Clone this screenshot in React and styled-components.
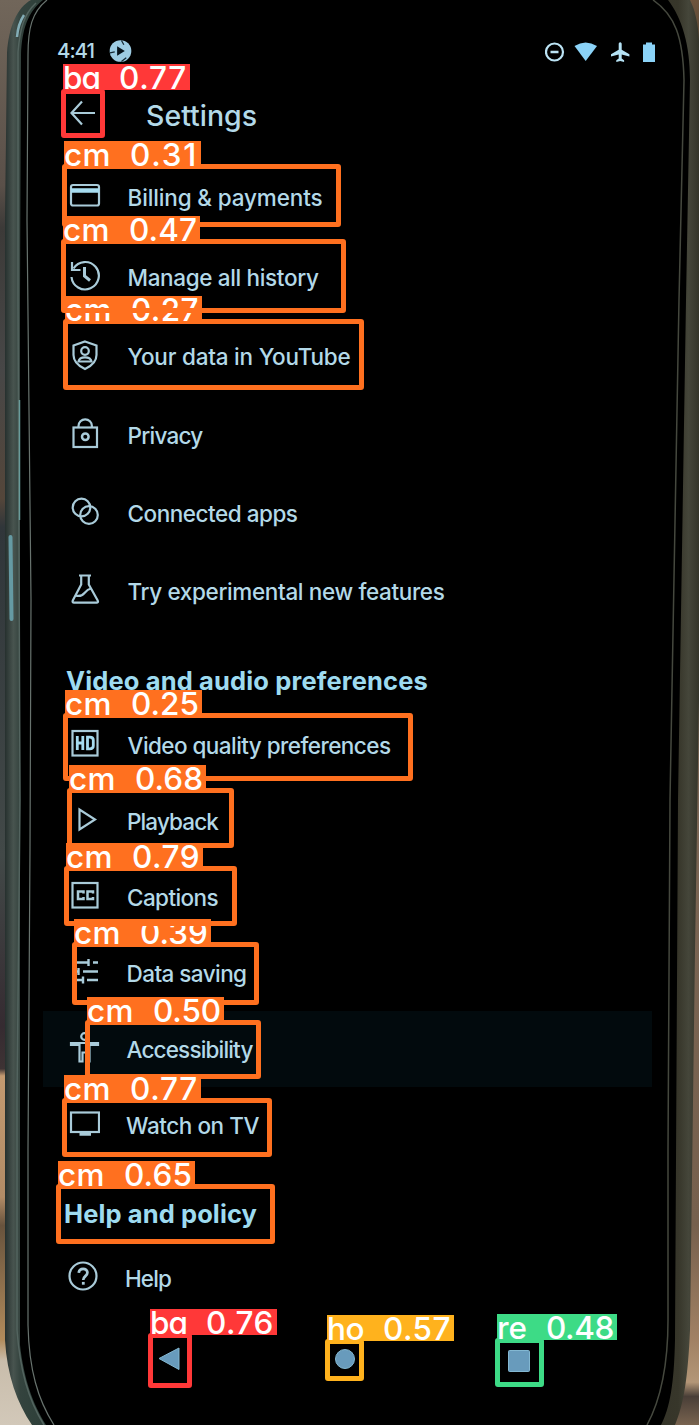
import React, { useLayoutEffect, useRef } from "react";
import styled, { createGlobalStyle } from "styled-components";

const GlobalStyle = createGlobalStyle`
  * { box-sizing: border-box; }
  body {
    margin: 0;
    background: #000;
    font-family: Inter, "Open Sans", "Liberation Sans", sans-serif;
  }
`;

const Stage = styled.main`
  position: relative;
  width: 699px;
  height: 1425px;
  overflow: hidden;
  background: #000;
`;

const Backdrop = styled.svg`
  position: absolute;
  inset: 0;
  display: block;
`;

const Screen = styled.div`
  position: relative;
  display: flex;
  flex-direction: column;
  height: 100%;
  padding: 26px 47px 0 43px;
  color: #b3d9e8;
`;

const StatusBar = styled.header`
  display: flex;
  align-items: center;
  flex: none;
  height: 50px;
  padding: 0 0 0 14px;
`;

const StatusIcons = styled.div`
  display: flex;
  align-items: center;
  margin-left: auto;
  padding: 2px 0 0;
  margin-right: -5px;
`;

const AppBar = styled.div`
  display: flex;
  align-items: center;
  flex: none;
  height: 78px;
  margin-bottom: 3px;
  padding: 2px 0 0 26px;
`;

const IconSlot = styled.span`
  display: flex;
  flex: none;
  width: ${(p) => p.$w}px;
  margin-bottom: ${(p) => p.$lift ?? 4}px;
`;

const Row = styled.div`
  display: flex;
  align-items: center;
  flex: none;
  height: ${(p) => p.$height}px;
  padding-left: ${(p) => p.$pad}px;
  background: ${(p) => (p.$active ? "#020a0d" : "transparent")};
`;

const SectionTitle = styled.h2`
  display: flex;
  align-items: center;
  flex: none;
  height: 77px;
  margin: 0;
  padding: 26px 0 0 ${(p) => p.$pad}px;
  color: #9edbf0;
`;

const NavBar = styled.nav`
  display: flex;
  align-items: center;
  flex: none;
  height: 86px;
  padding-left: 115px;
`;

const NavItem = styled.span`
  display: flex;
  width: ${(p) => p.$w}px;
  padding-top: ${(p) => p.$drop ?? 0}px;
`;

const Text = styled.span`
  display: inline-block;
  white-space: nowrap;
  font-size: ${(p) => p.$size}px;
  font-weight: ${(p) => p.$weight};
  line-height: 1.2;
`;

const Box = styled.div`
  position: absolute;
  left: ${(p) => p.$x}px;
  top: ${(p) => p.$y}px;
  width: ${(p) => p.$w}px;
  height: ${(p) => p.$h}px;
  border: 5px solid ${(p) => p.$color};
  border-radius: 3px;
`;

const Tag = styled.div`
  position: absolute;
  left: ${(p) => p.$x}px;
  top: ${(p) => p.$y}px;
  width: ${(p) => p.$w}px;
  height: 26px;
  display: flex;
  align-items: center;
  gap: 19px;
  padding: 1px 0 0 0;
  background: ${(p) => p.$color};
  color: #fff;
`;

/* Sets a label on a fixed measure by adjusting its tracking. */
function Fit({ width, size = 22.5, weight = 500, children, ...rest }) {
  const ref = useRef(null);
  useLayoutEffect(() => {
    const el = ref.current;
    const fit = () => {
      el.style.letterSpacing = "0px";
      const natural = el.getBoundingClientRect().width;
      const step = (width - natural) / Math.max(1, children.length);
      el.style.letterSpacing = `${step}px`;
    };
    fit();
    document.fonts?.ready.then(fit);
  }, [width, children]);
  return (
    <Text ref={ref} $size={size} $weight={weight} {...rest}>
      {children}
    </Text>
  );
}

const TagText = styled(Fit)`
  line-height: 24px;
  font-feature-settings: "cv11" 1;
`;

const Glyph = ({ children, size = 32 }) => (
  <svg
    width={size}
    height={size}
    viewBox={`0 0 ${size} ${size}`}
    fill="none"
    stroke="#a9cbd9"
    strokeWidth="2.2"
  >
    {children}
  </svg>
);

const icons = {
  card: (
    <>
      <rect x="2" y="6" width="28" height="20.500" rx="2" />
      <path d="M2 11.500h28" strokeWidth="4.500" stroke="#a6dcf0" />
    </>
  ),
  history: (
    <>
      <path d="M4.500 9.500A13.700 13.700 0 1 1 2.500 18" />
      <path d="M3 3v8h8.500" />
      <path d="M15.500 8v9l5.500 4.500" strokeWidth="3" />
    </>
  ),
  shield: (
    <>
      <path d="M16 2.500l11.500 4v9.500c0 6.500-5 11-11.500 14-6.500-3-11.500-7.500-11.500-14V6.500z" />
      <circle cx="16" cy="12" r="3.800" />
      <path d="M9.500 22.500c.5-3 3-4.200 6.500-4.200s6 1.200 6.500 4.200z" />
    </>
  ),
  lock: (
    <>
      <rect x="4.500" y="10.500" width="23.500" height="19.500" />
      <path d="M9.500 10.500V9a6.700 6.700 0 0 1 13.400 0v1.500" />
      <circle cx="16.300" cy="19.800" r="3.300" strokeWidth="2.500" />
    </>
  ),
  rings: (
    <>
      <circle cx="12.500" cy="12.500" r="8.800" />
      <circle cx="20" cy="20" r="8.800" />
    </>
  ),
  flask: (
    <>
      <path d="M10 2.500h12M12.200 2.500v9L3.800 27.500c-.6 1.500 0 2.200 1.200 2.200h22.500c1.300 0 2-.7 1.200-2.200L19.800 11.500V2.500" />
      <path d="M6.500 22.500c4 1.200 6.500.5 9-2.500s3.500-4 6.500-4.500" />
    </>
  ),
  hd: (
    <>
      <rect x="3.500" y="4" width="25" height="24.500" />
      <path d="M8.300 9v14M13.800 9v14M8.300 16h5.500M18.500 10.200v11.600h2.300c2.400 0 3.500-1 3.500-3v-5.600c0-2-1.100-3-3.500-3z" strokeWidth="2.800" stroke="#a6dcf0" />
    </>
  ),
  play: <path d="M10.500 6.500v20L26 16.500z" />,
  cc: (
    <>
      <rect x="3.500" y="4" width="25" height="24.500" />
      <path d="M14.500 14.500v-2h-5.500v7.500h5.500v-2M24 14.500v-2h-5.500v7.500H24v-2" strokeWidth="2.500" />
    </>
  ),
  tune: (
    <path d="M4 7.500h15M19.500 4v7M24 7.500h5M4 16.500h6M9.500 13v7M14 16.500h15M4 25h9.500M14 21.500v7M18 25h11" strokeWidth="2.400" />
  ),
  person: (
    <>
      <circle cx="16.500" cy="5.500" r="3.300" />
      <path d="M3 12h27v2h-8.500v16.500h-3v-9h-4v9h-3V14H3z" />
    </>
  ),
  tv: (
    <>
      <rect x="3" y="5.500" width="28" height="19.500" />
      <path d="M11.500 27h11.500" strokeWidth="3.500" />
    </>
  ),
  help: (
    <>
      <circle cx="16" cy="16" r="13.500" />
      <path d="M11.800 12.900c.2-2.600 2-4.100 4.300-4.100s4.300 1.500 4.300 3.900c0 3.300-4.200 3.600-4.200 7.200" strokeWidth="2.700" />
      <path d="M14.900 23.300h2.800" strokeWidth="2.800" />
    </>
  ),
};

const mainRows = [
  ["card", "Billing & payments", 195, 80],
  ["history", "Manage all history", 191, 80],
  ["shield", "Your data in YouTube", 223, 79],
  ["lock", "Privacy", 75, 78],
  ["rings", "Connected apps", 170, 78],
  ["flask", "Try experimental new features", 317, 78],
];

const mediaRows = [
  ["hd", "Video quality preferences", 263, 26, 58.5],
  ["play", "Playback", 91, 26, 58],
  ["cc", "Captions", 91, 26, 58],
  ["tune", "Data saving", 120, 26, 57.5],
  ["person", "Accessibility", 126, 25, 58.5],
  ["tv", "Watch on TV", 133, 25, 58],
];

const ORANGE = "#ff701f";
const RED = "#ff3838";

/* Ordered from least to most confident, later ones lie on top. */
const detections = [
  { name: "cm", score: "0.25", color: ORANGE, tag: [65, 690, 137], box: [63, 713, 350, 68] },
  { name: "cm", score: "0.27", color: ORANGE, tag: [65, 296, 137], box: [63, 319, 301, 71] },
  { name: "cm", score: "0.31", color: ORANGE, tag: [64, 141, 137], box: [62, 164, 279, 63] },
  { name: "cm", score: "0.39", color: ORANGE, tag: [74, 919, 137], box: [72, 942, 187, 63] },
  { name: "cm", score: "0.47", color: ORANGE, tag: [63, 216, 137], box: [61, 239, 285, 74] },
  { name: "re", score: "0.48", color: "#3ddb86", tag: [497, 1314, 120], box: [495, 1338, 49, 49] },
  { name: "cm", score: "0.50", color: ORANGE, tag: [87, 997, 137], box: [85, 1020, 176, 59] },
  { name: "ho", score: "0.57", color: "#ffb21d", tag: [327, 1315, 127], box: [325, 1339, 39, 42] },
  { name: "cm", score: "0.65", color: ORANGE, tag: [58, 1161, 137], box: [56, 1184, 219, 60] },
  { name: "cm", score: "0.68", color: ORANGE, tag: [69, 765, 137], box: [67, 788, 167, 60] },
  { name: "ba", score: "0.76", color: RED, tag: [150, 1309, 127], box: [148, 1333, 44, 55] },
  { name: "ba", score: "0.77", color: RED, tag: [63, 64, 127], box: [61, 89, 44, 49] },
  { name: "cm", score: "0.77", color: ORANGE, tag: [64, 1075, 137], box: [62, 1098, 210, 59] },
  { name: "cm", score: "0.79", color: ORANGE, tag: [66, 843, 137], box: [64, 866, 173, 60] },
];

const nameWidths = { cm: 47, ba: 37, ho: 37, re: 30 };

function PhoneBody() {
  return (
    <Backdrop width="699" height="1425" viewBox="0 0 699 1425">
      <defs>
        <linearGradient id="wallLeft" x1="0" y1="0" x2="0" y2="1">
          <stop offset="0" stopColor="#71665a" />
          <stop offset=".13" stopColor="#5a5049" />
          <stop offset=".16" stopColor="#3c3a38" />
          <stop offset=".26" stopColor="#474747" />
          <stop offset=".35" stopColor="#54463a" />
          <stop offset=".37" stopColor="#30363a" />
          <stop offset=".6" stopColor="#424948" />
          <stop offset=".72" stopColor="#352b31" />
          <stop offset=".75" stopColor="#3e3334" />
          <stop offset=".755" stopColor="#c39a70" />
          <stop offset=".84" stopColor="#b18b66" />
          <stop offset=".86" stopColor="#68533d" />
          <stop offset=".94" stopColor="#b18b5b" />
          <stop offset=".955" stopColor="#c9bdab" />
          <stop offset="1" stopColor="#d2c8b9" />
        </linearGradient>
        <linearGradient id="wallRight" x1="0" y1="0" x2="0" y2="1">
          <stop offset="0" stopColor="#6e543c" />
          <stop offset=".05" stopColor="#493d2e" />
          <stop offset=".45" stopColor="#554a3d" />
          <stop offset=".5" stopColor="#7c6756" />
          <stop offset=".86" stopColor="#76604d" />
          <stop offset=".94" stopColor="#a18164" />
          <stop offset=".97" stopColor="#b39677" />
          <stop offset=".98" stopColor="#493e37" />
          <stop offset="1" stopColor="#78634f" />
        </linearGradient>
        <linearGradient id="rim" x1="0" y1="0" x2="1" y2="0">
          <stop offset="0" stopColor="#26302e" />
          <stop offset=".012" stopColor="#48544f" />
          <stop offset=".022" stopColor="#34433e" />
          <stop offset=".04" stopColor="#30413b" />
          <stop offset=".5" stopColor="#151713" />
          <stop offset=".97" stopColor="#37362a" />
          <stop offset=".985" stopColor="#45463a" />
          <stop offset="1" stopColor="#35352a" />
        </linearGradient>
      </defs>
      <rect width="350" height="1425" fill="url(#wallLeft)" />
      <rect x="350" width="349" height="1425" fill="url(#wallRight)" />
      <path fill="url(#rim)" d="M31 0C17 8 9 26 7 53L5 220V1340C7 1375 17 1403 32 1425H675C684 1404 688 1376 690 1330L695 950L699 700V40C698 23 695 10 690 0Z" />
      <path fill="#000" d="M43 0C28 12 22 29 21 55L20 300V1345C24 1380 33 1404 46 1425H661C670 1408 674 1384 675 1340L678 800L686 300L690 80C690 45 682 18 668 0Z" />
      <path fill="none" stroke="#68736e" strokeWidth="1.200" d="M47 0C32 12 28 28 28 55L27 220L31 600L30 850L28 1150V1325C29 1370 38 1400 54 1425" />
      <path fill="none" stroke="#45483e" strokeWidth="1.500" d="M653 0C675 15 683 37 684 80L679 300L670 800L668 1150V1320C668 1370 660 1401 647 1425" />
      <path fill="none" stroke="#53645f" strokeWidth="1.500" d="M36 3C24 14 20 28 18 52V300L20 800L17 1100V1330C20 1370 28 1399 44 1425" />
      <path fill="none" stroke="#83adb6" strokeWidth="2.500" d="M24 15Q18 24 17 37" />
      <path fill="none" stroke="#659aa3" strokeWidth="4" strokeLinecap="round" d="M10.500 537L11.500 619" />
      <path fill="none" stroke="#699c9b" strokeWidth="1.500" d="M19.500 400V520" />
    </Backdrop>
  );
}

export default function App() {
  return (
    <Stage>
      <GlobalStyle />
      <PhoneBody />
      <Screen>
        <StatusBar>
          <IconSlot $w={52} $lift={0}>
            <Fit width={37} size={20.5}>4:41</Fit>
          </IconSlot>
          <svg width="23" height="24" viewBox="0 0 24 24">
            <circle cx="12" cy="12" r="11.300" fill="#9dcce3" />
            <path d="M8.500 7v10l8-5z" fill="#06131b" />
            <path d="M13 1l2.500 4.500M1 14l5-1M13 23l5-4" stroke="#152a35" strokeWidth="1.300" />
          </svg>
          <StatusIcons>
            <svg width="112" height="22" viewBox="0 0 112 22">
              <circle cx="9.500" cy="11" r="8.500" fill="none" stroke="#bce4f5" strokeWidth="2.200" />
              <path d="M5.500 11h8" stroke="#bce4f5" strokeWidth="2.500" />
              <path d="M29.500 5Q40.500-2 52 5L40.700 20z" fill="#8bd3f8" />
              <path d="M75.200 1.200c-1.200 0-1.500 1-1.500 2v5.500L66 13.200v2.300l7.700-2v4l-2.400 1.800V21l3.900-1 3.900 1v-1.700l-2.400-1.800v-4l7.700 2v-2.300l-7.700-4.500V3.200c0-1-.3-2-1.500-2z" fill="#b5e2f4" />
              <path d="M98 3.500h3V1.500h6v2h3V21H98z" fill="#8bd3f8" />
            </svg>
          </StatusIcons>
        </StatusBar>

        <AppBar>
          <IconSlot $w={77} $lift={6}>
            <svg width="28" height="28" viewBox="0 0 28 28" fill="none" stroke="#a9cbd9" strokeWidth="2.200">
              <path d="M26 14H2.500M13 2.500L2.500 14 13 25.500" />
            </svg>
          </IconSlot>
          <Fit width={111} size={28.5}>Settings</Fit>
        </AppBar>

        {mainRows.map(([icon, label, width, height]) => (
          <Row key={label} $height={height} $pad={26}>
            <IconSlot $w={58.5}>
              <Glyph>{icons[icon]}</Glyph>
            </IconSlot>
            <Fit width={width}>{label}</Fit>
          </Row>
        ))}

        <SectionTitle $pad={23}>
          <Fit width={362} size={25.5} weight={750}>Video and audio preferences</Fit>
        </SectionTitle>
        {mediaRows.map(([icon, label, width, pad, slot]) => (
          <Row key={label} $height={76} $pad={pad} $active={icon === "person"}>
            <IconSlot $w={slot}>
              <Glyph>{icons[icon]}</Glyph>
            </IconSlot>
            <Fit width={width}>{label}</Fit>
          </Row>
        ))}

        <SectionTitle $pad={21}>
          <Fit width={193} size={25.5} weight={750}>Help and policy</Fit>
        </SectionTitle>
        <Row $height={76} $pad={24}>
          <IconSlot $w={58}>
            <Glyph>{icons.help}</Glyph>
          </IconSlot>
          <Fit width={46}>Help</Fit>
        </Row>

        <NavBar>
          <NavItem $w={176}>
            <svg width="22" height="24" viewBox="0 0 22 24">
              <path d="M21 1v21.500L1 11.500z" fill="#689bbc" stroke="#83b8d2" />
            </svg>
          </NavItem>
          <NavItem $w={174}>
            <svg width="22" height="22" viewBox="0 0 22 22">
              <circle cx="11" cy="11" r="9.500" fill="#689bbc" stroke="#83b8d2" />
            </svg>
          </NavItem>
          <NavItem $w={22} $drop={4}>
            <svg width="22" height="22" viewBox="0 0 22 22">
              <rect x=".500" y=".500" width="21" height="21" rx="1" fill="#689bbc" stroke="#83b8d2" />
            </svg>
          </NavItem>
        </NavBar>
      </Screen>

      {detections.map(({ name, score, color, tag, box }) => (
        <React.Fragment key={name + score + tag[1]}>
          <Box $x={box[0]} $y={box[1]} $w={box[2]} $h={box[3]} $color={color} />
          <Tag $x={tag[0]} $y={tag[1]} $w={tag[2]} $color={color}>
            <TagText width={nameWidths[name]} size={31.5}>{name}</TagText>
            <TagText width={68} size={31.5}>{score}</TagText>
          </Tag>
        </React.Fragment>
      ))}
    </Stage>
  );
}
